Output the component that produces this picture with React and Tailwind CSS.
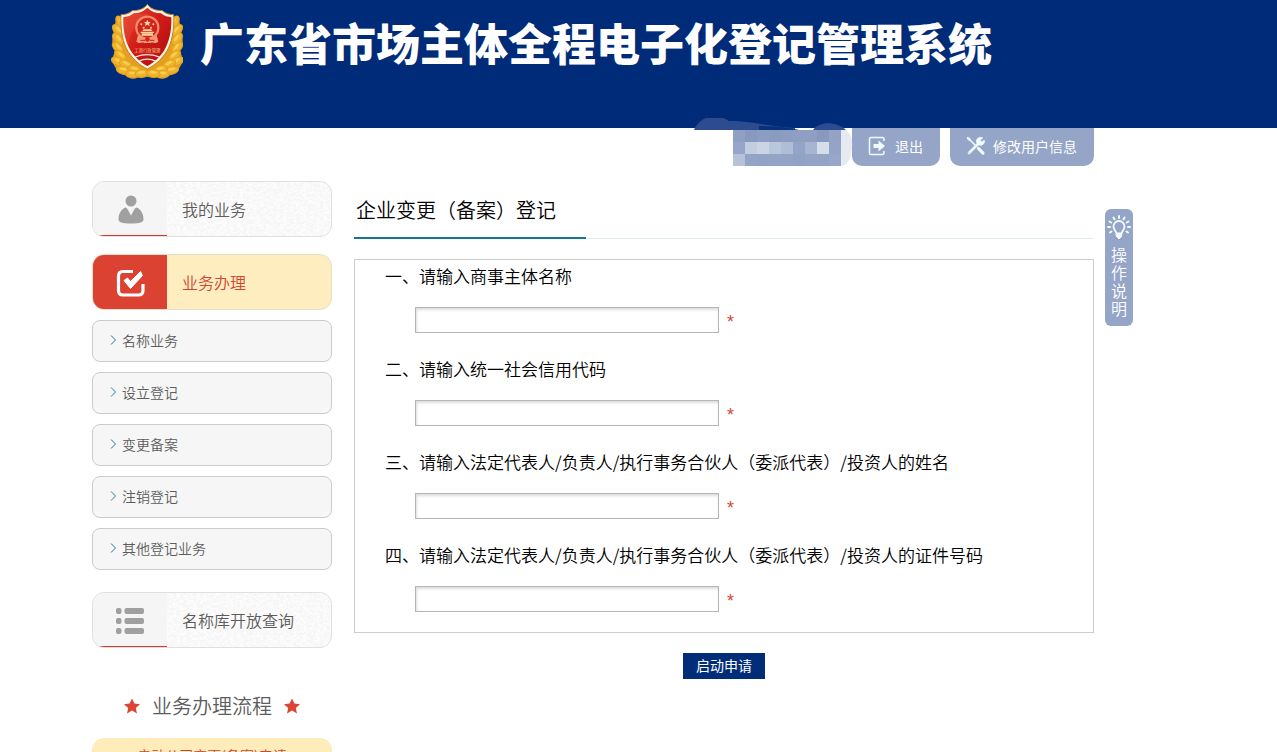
// =====================================================
// 广东省市场主体全程电子化登记管理系统
// 企业变更（备案）登记
// =====================================================

const SUB_ITEMS = ['名称业务', '设立登记', '变更备案', '注销登记', '其他登记业务'];

const FIELDS = [
  { id: 'entity-name', label: '一、请输入商事主体名称' },
  { id: 'credit-code', label: '二、请输入统一社会信用代码' },
  { id: 'person-name', label: '三、请输入法定代表人/负责人/执行事务合伙人（委派代表）/投资人的姓名' },
  { id: 'person-cert', label: '四、请输入法定代表人/负责人/执行事务合伙人（委派代表）/投资人的证件号码' },
];

// ── Emblem ────────────────────────────────────────────
const LEAVES = [
  [46, 66, 62], [38, 90, 50], [38, 116, 52], [38, 142, 48], [46, 166, 38],
  [38, 184, 28], [62, 192, 26], [54, 210, 14], [88, 208, 12], [82, 222, 4], [110, 220, -6],
];

function WreathSide() {
  return (
    <g>
      <path d="M44 50Q24 68 26 100Q16 128 30 152Q18 178 28 196Q40 224 70 226L128 230V190L70 130Z" fill="#e3a01f" />
      {LEAVES.map(([x, y, a]) => (
        <g key={`${x}-${y}`} transform={`translate(${x} ${y}) rotate(${a})`}>
          <ellipse rx="22" ry="13" fill="#e2a021" />
          <ellipse rx="19" ry="10" cy="-1" fill="#f0b42c" />
          <ellipse rx="11" ry="4" cy="-4" fill="#f8cf52" />
        </g>
      ))}
    </g>
  );
}

function Emblem() {
  return (
    <svg viewBox="18 8 216 228" className="h-[76px] w-[72px] shrink-0" aria-hidden="true">
      <defs>
        <linearGradient id="shield" x1="0" y1="0" x2="1" y2="1">
          <stop offset="0" stopColor="#e8402c" />
          <stop offset="0.5" stopColor="#cf1a18" />
          <stop offset="1" stopColor="#ab0c10" />
        </linearGradient>
      </defs>
      <WreathSide />
      <g transform="translate(255 0) scale(-1 1)"><WreathSide /></g>
      <path
        d="M127 12C118 25 103 31 82 31C72 40 60 43 48 43C46 75 50 116 64 144C78 172 102 194 127 206C152 194 176 172 190 144C204 116 208 75 206 43C194 43 182 40 172 31C151 31 136 25 127 12Z"
        fill="#fff6e4" stroke="#c77e24" strokeWidth="3"
      />
      <path
        d="M127 22C116 34 102 39 86 39C76 47 66 50 55 51C54 82 58 114 71 140C83 165 104 185 127 197C150 185 171 165 183 140C196 114 200 82 199 51C188 50 178 47 168 39C152 39 138 34 127 22Z"
        fill="url(#shield)"
      />
      <path d="M86 40C76 47 66 50 56 52C54 82 59 112 70 136C74 100 92 66 132 42C117 39 100 40 86 40Z" fill="#f26b4c" opacity=".25" />
      <circle cx="127" cy="82" r="33" fill="none" stroke="#f08c66" strokeWidth="7" />
      <circle cx="127" cy="82" r="29" fill="#d4231c" />
      <path d="M127 58l3 7h7l-5 5 2 7-7-4-7 4 2-7-5-5h7Z" fill="#ffd9a4" />
      <g fill="#ffd3a0">
        <circle cx="109" cy="72" r="3" /><circle cx="145" cy="72" r="3" />
        <circle cx="116" cy="82" r="3" /><circle cx="138" cy="82" r="3" />
        <path d="M112 92h30l-4-5h-22ZM107 94h40v4h-40ZM110 99h34v7h-34Z" />
      </g>
      <path d="M99 104C109 116 145 116 155 104L160 124C150 132 143 124 137 128H117C111 124 104 132 94 124Z" fill="#f09a7a" />
      <circle cx="127" cy="117" r="7" fill="#d4231c" />
      <path d="M106 120h14M134 120h14" stroke="#c91f18" strokeWidth="3" />
      <text x="127" y="155" textAnchor="middle" fontSize="13" fill="#ffd08b">工商行政管理</text>
      <path d="M91 170Q127 156 163 170M101 183Q127 170 153 183" fill="none" stroke="#ffe8dc" strokeWidth="4" />
    </svg>
  );
}

// ── Icons ─────────────────────────────────────────────
function UserIcon() {
  return (
    <svg viewBox="0 0 26 30" className="h-[30px] w-[26px]" fill="#a0a0a0" aria-hidden="true">
      <circle cx="13" cy="6" r="5.500" />
      <path d="M7.500 12.500Q9 12.500 10 15L13 20.500L16 15Q17 12.500 18.500 12.500C22 13.500 25.500 18 25.500 24C25.500 27.500 22 28.500 13 28.500C4 28.500 .500 27.500 .500 24C.500 18 4 13.500 7.500 12.500Z" />
    </svg>
  );
}

function CheckIcon() {
  return (
    <svg viewBox="0 0 30 30" className="h-[30px] w-[30px]" fill="none" stroke="#fff" aria-hidden="true">
      <path d="M17 3.500H7Q2.500 3.500 2.500 8V22.500Q2.500 27 7 27H22.500Q27 27 27 22.500V16" strokeWidth="3.200" />
      <path d="M8 12.500L11.500 10L14.500 13.500L24.500 3.500L26.500 7.500L14.500 20.500Z" fill="#fff" strokeWidth="1" />
    </svg>
  );
}

function ListIcon() {
  return (
    <svg viewBox="0 0 30 28" className="h-7 w-[30px]" fill="#a0a0a0" aria-hidden="true">
      {[1, 11, 21].map((y) => (
        <g key={y}>
          <rect x="0" y={y} width="5.500" height="6" rx="2" />
          <rect x="8.500" y={y} width="19.500" height="6" rx="2" />
        </g>
      ))}
    </svg>
  );
}

function LogoutIcon() {
  return (
    <svg viewBox="0 0 18 20" className="h-5 w-[18px]" fill="none" stroke="#effaff" strokeWidth="1.500" aria-hidden="true">
      <path d="M16 5V3Q16 1.500 14.500 1.500H3Q1.500 1.500 1.500 3V17Q1.500 18.500 3 18.500H14.500Q16 18.500 16 17V15" />
      <path d="M5.500 8H10.500V4.500L17 10L10.500 15.500V12H5.500Z" fill="#effaff" stroke="none" />
    </svg>
  );
}

function ToolsIcon() {
  return (
    <svg viewBox="0 0 20 20" className="h-5 w-5" fill="none" stroke="#effaff" strokeLinecap="round" aria-hidden="true">
      <path d="M3 3L9 9" strokeWidth="1.600" />
      <path d="M1.500 1.500L4 2.500L4.500 4.500L2.500 4Z" fill="#effaff" strokeWidth="1" />
      <path d="M12.500 12.500L17 17.200" strokeWidth="3.200" />
      <path d="M3 17L12.500 7.500" strokeWidth="2.600" />
      <path d="M16.500 1.800A4 4 0 1 0 18.400 4.500L15.500 5.800L14.200 4.500Z" fill="#effaff" strokeWidth=".8" />
      <circle cx="3.200" cy="16.800" r=".6" fill="#94a5c7" stroke="none" />
    </svg>
  );
}

function BulbIcon() {
  return (
    <svg viewBox="0 0 24 26" className="h-[26px] w-6" fill="none" stroke="#f3fbff" strokeWidth="1.800" strokeLinecap="round" aria-hidden="true">
      <path d="M9.500 18.500C9.500 16.500 6.500 15 6.500 11.500A5.500 5.500 0 0 1 17.500 11.500C17.500 15 14.500 16.500 14.500 18.500Z" />
      <path d="M9.500 19H14.500V21.500L12 24L9.500 21.500Z" fill="#f3fbff" strokeWidth="1" />
      <path d="M12 1V3M6.500 2.500L7.500 4.300M17.500 2.500L16.500 4.300M2.500 6.500L4.200 7.500M21.500 6.500L19.800 7.500M1 12H3M23 12H21M3 17.500L4.500 16.500M21 17.500L19.500 16.500" strokeWidth="2" />
    </svg>
  );
}

function Star() {
  return (
    <svg viewBox="0 0 16 16" className="h-4 w-4" aria-hidden="true">
      <path d="M8 .5L10.400 5.600L16 6.200L11.800 9.900L13 15.500L8 12.600L3 15.500L4.200 9.900L0 6.200L5.600 5.600Z" fill="#dc4435" />
    </svg>
  );
}

// Faint paper grain behind the idle menu cards
function Grain({ id }) {
  return (
    <svg className="absolute inset-0 h-full w-full opacity-70" aria-hidden="true">
      <filter id={id}>
        <feTurbulence type="fractalNoise" baseFrequency="0.3 0.4" numOctaves="3" seed="4" />
        <feColorMatrix values="0 0 0 0 1  0 0 0 0 1  0 0 0 0 1  4 0 0 0 -1.5" />
      </filter>
      <rect width="100%" height="100%" filter={`url(#${id})`} />
    </svg>
  );
}

// ── Side menu ─────────────────────────────────────────
function MenuCard({ id, icon, label, active }) {
  return (
    <a
      href={`#${id}`}
      className={`flex h-14 overflow-hidden rounded-xl border ${
        active ? 'border-[#e8dfc8] bg-[#feeebf] text-[#cf4632]' : 'border-[#e0e0e0] bg-[#f6f6f6] text-[#5c5c5c]'
      }`}
    >
      <span
        className={`flex w-[74px] shrink-0 items-center justify-center pt-[2px] pl-[2px] ${
          active ? 'bg-[#dc4232]' : 'bg-[#f5f5f5] shadow-[inset_0_-1px_#d93a2b]'
        }`}
      >
        {icon}
      </span>
      <span className="relative flex flex-1 items-center pl-[15px] text-base">
        {!active && <Grain id={`grain-${id}`} />}
        <span className="relative">{label}</span>
      </span>
    </a>
  );
}

function Sidebar() {
  return (
    <aside className="w-60 shrink-0">
      <nav>
        <MenuCard id="mine" icon={<UserIcon />} label="我的业务" />
        <div className="mt-[17px]">
          <MenuCard id="handle" icon={<CheckIcon />} label="业务办理" active />
        </div>
        <ul className="mt-[10px] flex flex-col gap-[10px]">
          {SUB_ITEMS.map((item) => (
            <li key={item}>
              <a href="#handle" className="flex h-[42px] items-center gap-[5px] rounded-lg border border-[#ccc] bg-[#f6f6f6] pb-[2px] pl-[17px] text-sm text-[#5c5c5c]">
                <svg viewBox="0 0 7 10" className="h-[10px] w-[7px]" fill="none" stroke="#1c7c9c" aria-hidden="true">
                  <path d="M1 .5L5.500 5L1 9.500" />
                </svg>
                {item}
              </a>
            </li>
          ))}
        </ul>
        <div className="mt-[22px]">
          <MenuCard id="names" icon={<ListIcon />} label="名称库开放查询" />
        </div>
      </nav>

      <h2 className="mt-[43px] flex items-center justify-center gap-3 text-xl leading-[30px] text-[#5c5c5c]">
        <Star />
        业务办理流程
        <Star />
      </h2>
      <div className="mt-[17px] rounded-xl bg-[#feecbb] pt-[7px] pb-4 text-center text-sm leading-5 text-[#cf4632]">
        启动公司变更(备案)申请
      </div>
    </aside>
  );
}

// ── Top bar under the header ──────────────────────────
const MASK_TOP = ['#8fa0c3', '#8799be', '#8d9dc2', '#8a9bc0', '#8c9dc2', '#8f9fc4', '#8e9fc3', '#8999be', '#94a2c6'];
const MASK_MID = ['#96a5c8', '#c3cde0', '#cad4e5', '#bac6dc', '#afbdd7', '#94a4c7', '#a7b5d1', '#d5dfeb', '#94a4c7'];
const MASK_LOW = ['#b6c1da', '#94a4c6', '#93a3c5', '#94a4c6', '#94a4c6', '#92a2c5', '#94a4c6', '#94a4c6', '#98a7c9'];

function UserBadge() {
  return (
    <div className="relative mr-[11px] h-[38px] w-[108px]" role="img" aria-label="用户">
      <svg className="absolute -top-[10px] -left-[40px] h-12 w-40" viewBox="0 0 160 48">
        <path d="M1 12C8 -4 26 -4 36 3H42C60 4 75 8 102 10V12Z" fill="#2d4c8f" />
        <path d="M66 8Q90 8 106 12H66Z" fill="#08317b" />
        <path d="M120 12C126 3 144 3 153 12Z" fill="#2d4c8f" />
        <path d="M145 12H153Q162 18 158 36Q156 47 148 48H145Z" fill="#e5eaf3" />
        {MASK_TOP.map((c, i) => <rect key={i} x={40 + i * 12} y="12" width="12" height="12" fill={c} />)}
        {MASK_MID.map((c, i) => <rect key={i} x={40 + i * 12} y="24" width="12" height="12" fill={c} />)}
        {MASK_LOW.map((c, i) => <rect key={i} x={40 + i * 12} y="36" width="12" height="12" fill={c} />)}
      </svg>
    </div>
  );
}

function Toolbar() {
  return (
    <div className="mr-[39px] flex justify-end text-sm font-normal text-white">
      <UserBadge />
      <button type="button" className="flex h-[38px] w-[88px] items-center gap-[9px] rounded-b-[10px] bg-[#94a5c7] pb-[2px] pl-4">
        <LogoutIcon />
        退出
      </button>
      <button type="button" className="ml-[10px] flex h-[38px] w-36 items-center gap-[7px] rounded-b-[10px] bg-[#94a5c7] pb-[2px] pl-4">
        <ToolsIcon />
        修改用户信息
      </button>
    </div>
  );
}

// ── Form ──────────────────────────────────────────────
function ChangeForm() {
  return (
    <form className="min-w-0 flex-1" onSubmit={(e) => e.preventDefault()}>
      <div className="flex border-b border-[#e3eded]">
        <h1 className="-mb-px h-[58px] w-[232px] border-b-2 border-[#16788e] pt-[14px] pl-[2px] text-xl leading-[30px] text-black">
          企业变更（备案）登记
        </h1>
      </div>

      <div className="mt-5 flex flex-col gap-[23px] border border-[#ccc] pt-[3px] pr-4 pb-5 pl-[30px]">
        {FIELDS.map((f) => (
          <div key={f.id}>
            <label htmlFor={f.id} className="block text-[17px] leading-[25px] text-black">{f.label}</label>
            <div className="mt-[19px] flex items-center pl-[30px]">
              <input
                id={f.id}
                type="text"
                required
                className="h-[26px] w-[304px] border border-[#b5b5b5] bg-white px-2 text-sm shadow-[inset_1px_2px_3px_#ddd] outline-none"
              />
              <span className="ml-2 pt-1 font-['Liberation_Sans'] text-lg leading-[22px] text-[#d0493a]">*</span>
            </div>
          </div>
        ))}
      </div>

      <div className="mt-5 flex justify-center">
        <button type="submit" className="h-[26px] bg-[#002c78] px-[13px] pb-[2px] text-sm font-normal text-white">启动申请</button>
      </div>
    </form>
  );
}

export default function App() {
  return (
    <div lang="zh-CN" className="h-screen overflow-hidden bg-white font-['Noto_Sans_CJK_SC',sans-serif] font-[350]">
      <header className="h-32 bg-[#002b78]">
        <div className="mx-auto flex max-w-[1093px] items-start gap-[17px] pt-[3px] pl-[19px]">
          <Emblem />
          <p className="pt-[6px] text-[44px] leading-[66px] font-black whitespace-nowrap text-white">
            广东省市场主体全程电子化登记管理系统
          </p>
        </div>
      </header>

      <div className="mx-auto max-w-[1093px] pr-[52px]">
        <Toolbar />
        <div className="mt-[15px] flex items-start">
          <Sidebar />
          <div className="w-[22px] shrink-0" />
          <ChangeForm />
          <button
            type="button"
            className="mt-7 ml-[11px] flex w-7 shrink-0 flex-col items-center rounded-md bg-[#94a5c7] pt-[6px] pb-[9px] text-base leading-[18px] text-white"
          >
            <BulbIcon />
            <span className="mt-1 w-4 break-all">操作说明</span>
          </button>
        </div>
      </div>
    </div>
  );
}
